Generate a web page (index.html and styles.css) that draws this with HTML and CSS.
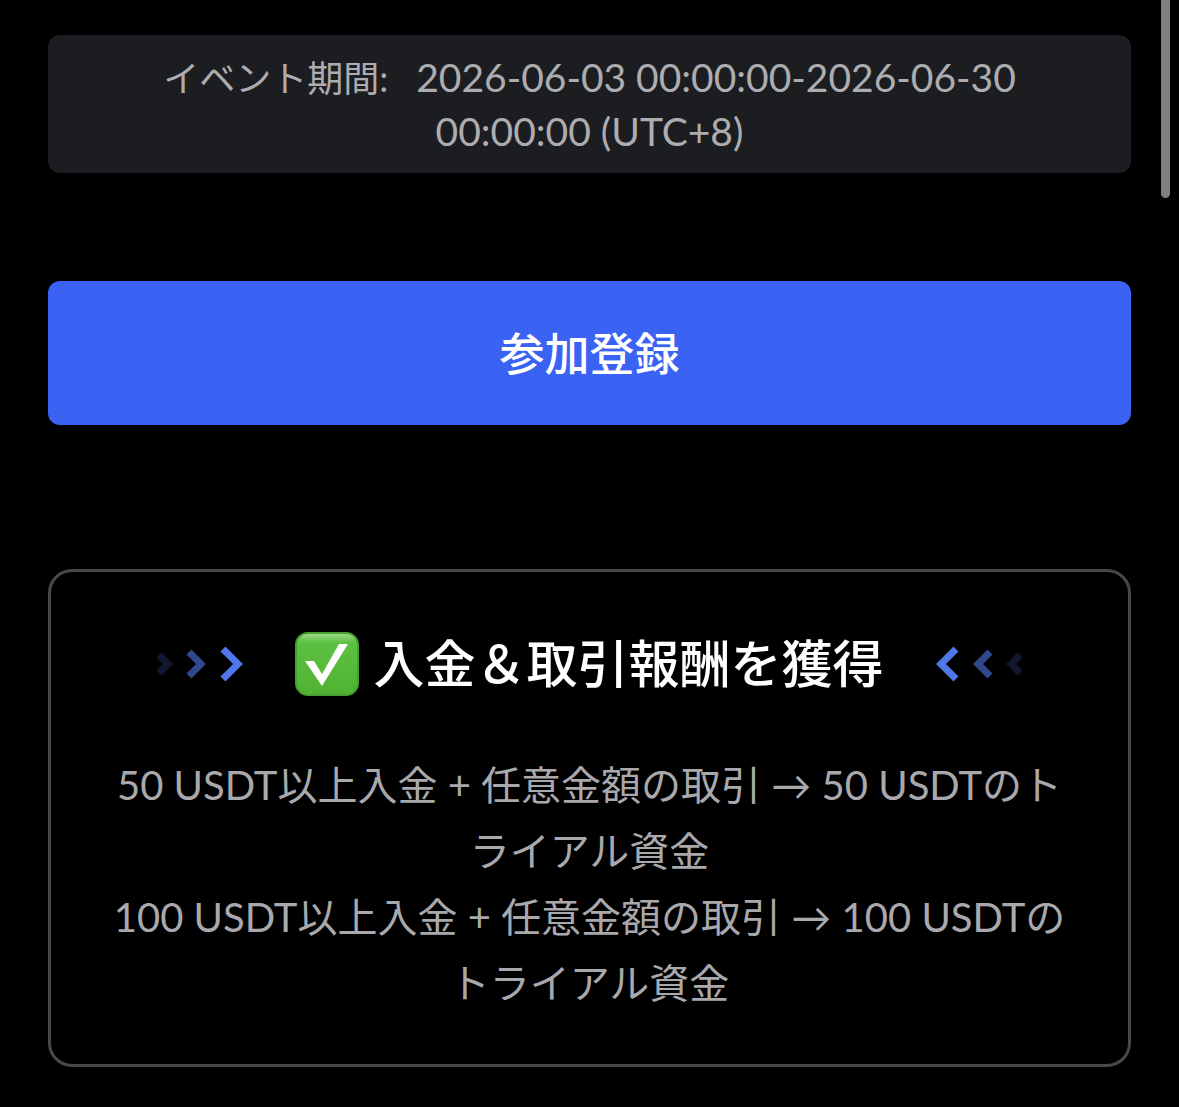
FILE: index.html
```html
<!DOCTYPE html>
<html lang="ja">
<head>
<meta charset="utf-8">
<meta name="viewport" content="width=device-width, initial-scale=1">
<title>入金＆取引報酬を獲得</title>
<link rel="stylesheet" href="styles.css">
</head>
<body>
<main class="page">
  <p class="period"><span class="period-label">イベント期間:</span> 2026-06-03 00:00:00-2026-06-30 00:00:00 (UTC+8)</p>
  <button class="join" type="button">参加登録</button>
  <section class="card">
    <header class="card-head">
      <svg class="arrows" viewBox="0 0 90 40" aria-hidden="true">
        <path class="far" d="M3 11l9 9-9 9"/>
        <path class="mid" d="M33 8l12 12-12 12"/>
        <path class="near" d="M67 5l15 15-15 15"/>
      </svg>
      <h1 class="title">
        <svg class="check" viewBox="0 0 64 64" aria-hidden="true">
          <defs>
            <linearGradient id="face" x1="0" y1="0" x2="0" y2="1">
              <stop offset="0" stop-color="#a0dd8c"/>
              <stop offset=".16" stop-color="#5cc040"/>
              <stop offset="1" stop-color="#50b233"/>
            </linearGradient>
          </defs>
          <rect x="1" y="1" width="62" height="62" rx="12" fill="url(#face)" stroke="#47a030" stroke-width="2"/>
          <path d="M10 29h9l8 13 17-30h9L27 54z" fill="#fff"/>
        </svg>
        <span>入金＆取引報酬を獲得</span>
      </h1>
      <svg class="arrows flip" viewBox="0 0 90 40" aria-hidden="true">
        <path class="far" d="M3 11l9 9-9 9"/>
        <path class="mid" d="M33 8l12 12-12 12"/>
        <path class="near" d="M67 5l15 15-15 15"/>
      </svg>
    </header>
    <p class="rewards">50 USDT以上入金 + 任意金額の取引 → 50 USDTのトライアル資金<br>100 USDT以上入金 + 任意金額の取引 → 100 USDTのトライアル資金</p>
  </section>
</main>
<div class="scroll-thumb" aria-hidden="true"></div>
</body>
</html>
```
FILE: styles.css
```css
* { box-sizing: border-box; }
body { margin: 0; background: #000; color: #fff; font-family: "Lato", "Noto Sans CJK JP", sans-serif; }
.page { padding: 35px 48px 40px; }
.period { margin: 0 0 108px; padding: 15px 100px; border-radius: 12px; background: #1c1d20; color: #adadb1; font-size: 39px; line-height: 54px; text-align: center; }
.period-label { margin-right: 18px; font-size: 36px; line-height: 1; }
.join { display: block; width: 100%; margin: 0 0 144px; padding: 37px 36px 35px; border: 0; border-radius: 12px; background: #3b63f3; color: #fff; font: 500 45px/72px "Lato", "Noto Sans CJK JP", sans-serif; }
.card { padding: 54px 57px 48px; border: 3px solid #48484b; border-radius: 24px; }
.card-head { display: flex; align-items: center; justify-content: center; gap: 49px; margin-bottom: 50px; }
.arrows { flex: none; width: 90px; height: 40px; fill: none; stroke: #5078ea; stroke-width: 7; }
.flip { transform: scaleX(-1); }
.far { opacity: .2; }
.mid { opacity: .6; }
.title { display: flex; align-items: center; gap: 14px; margin: 0; font-size: 51px; line-height: 76px; font-weight: 500; white-space: nowrap; }
.check { width: 64px; height: 64px; }
.rewards { margin: 0; color: #a9a9ad; font-size: 40px; line-height: 66px; text-align: center; word-break: break-all; }
.scroll-thumb { position: absolute; top: -20px; right: 9px; width: 9px; height: 218px; border-radius: 5px; background: #7f7f7f; }
```
